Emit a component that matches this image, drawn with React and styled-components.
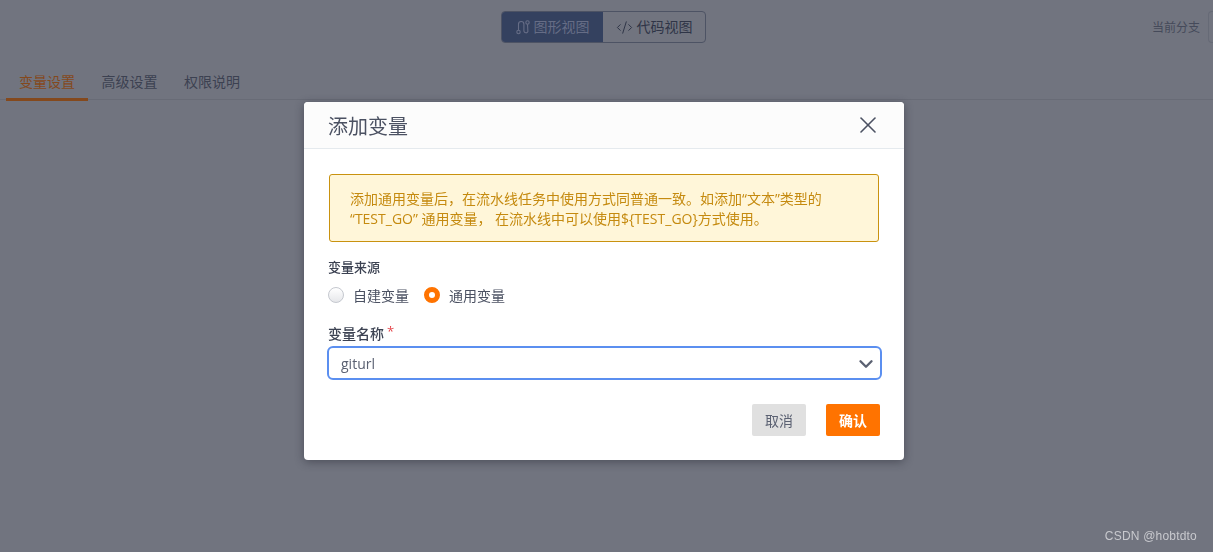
import React from "react";
import styled, { createGlobalStyle } from "styled-components";
import { CodeXml, X, ChevronDown } from "lucide-react";

const GlobalStyle = createGlobalStyle`
  html, body {
    margin: 0;
    height: 100%;
    background: #71747f;
  }
  body {
    font-family: "Open Sans", "Noto Sans CJK SC", sans-serif;
    font-size: 14px;
    overflow: hidden;
  }
`;

const Page = styled.div`
  width: 1213px;
  height: 552px;
  overflow: hidden;
  background: #71747f;
`;

const Header = styled.header`
  height: 66px;
  display: grid;
  grid-template-columns: 501px 205px 1fr;
  padding-top: 11px;
  box-sizing: border-box;
`;

const Toggle = styled.div`
  grid-column: 2;
  display: flex;
  height: 32px;
  border: 1px solid #4d5364;
  border-radius: 4px;
  box-sizing: border-box;
  overflow: hidden;
`;

const ToggleItem = styled.div`
  flex: ${(p) => (p.$active ? "0 0 101px" : "1")};
  display: flex;
  align-items: center;
  justify-content: center;
  gap: 4px;
  background: ${(p) => (p.$active ? "#34415f" : "transparent")};
  color: ${(p) => (p.$active ? "#666d86" : "#2f3547")};
  line-height: 30px;
`;

const Branch = styled.div`
  display: flex;
  align-items: center;
  justify-content: flex-end;
  height: 32px;
  gap: 8px;
  font-size: 12px;
  color: #454a5a;
`;

const BranchBox = styled.span`
  width: 5px;
  height: 32px;
  border: 1px solid #666a76;
  border-right: 0;
  border-radius: 4px 0 0 4px;
  box-sizing: border-box;
`;

const Tabs = styled.nav`
  display: flex;
  height: 33px;
  padding-left: 5.75px;
  border-bottom: 1px solid #686b76;
`;

const Tab = styled.div`
  width: 82.5px;
  height: 35px;
  box-sizing: border-box;
  text-align: center;
  line-height: 32px;
  color: ${(p) => (p.$active ? "#84491d" : "#3c4151")};
  border-bottom: 3px solid ${(p) => (p.$active ? "#84491d" : "transparent")};
`;

const Backdrop = styled.div`
  position: fixed;
  inset: 0;
  display: flex;
  justify-content: center;
  align-items: flex-start;
  padding: 102px 5px 0 0;
`;

const Modal = styled.section`
  width: 600px;
  height: 358px;
  background: #fff;
  border-radius: 4px;
  box-shadow: 0 2px 10px rgba(30, 33, 45, 0.45);
  overflow: hidden;
`;

const ModalHead = styled.div`
  height: 47px;
  box-sizing: border-box;
  display: flex;
  align-items: center;
  justify-content: space-between;
  padding: 0 22px 0 24px;
  background: #fcfcfc;
  border-bottom: 1px solid #e5eaee;
`;

const Title = styled.h2`
  margin: 0;
  font-size: 20px;
  font-weight: 400;
  color: #4b5162;
`;

const ModalBody = styled.div`
  padding: 25px 24px 0 24px;
`;

const Alert = styled.div`
  margin: 0 1px;
  height: 68px;
  box-sizing: border-box;
  padding: 14px 20px;
  background: #fff6d9;
  border: 1px solid #c9920f;
  border-radius: 3px;
  color: #c58a0f;
  font-size: 14px;
  line-height: 20px;
`;

const Label = styled.div`
  font-size: ${(p) => p.$size || 13}px;
  font-weight: 500;
  color: #3c4252;
  line-height: 20px;
`;

const SourceLabel = styled(Label)`
  margin-top: 15px;
`;

const NameLabel = styled(Label)`
  margin-top: 19px;
  position: relative;
`;

const Star = styled.span`
  position: absolute;
  left: 59px;
  top: -3px;
  font-size: 13px;
  font-weight: 400;
  color: #e5484d;
`;

const Radios = styled.div`
  display: flex;
  align-items: center;
  gap: 15px;
  margin-top: 8px;
  height: 20px;
`;

const RadioItem = styled.label`
  display: flex;
  align-items: center;
  gap: 9px;
  color: #4b5162;
`;

const RadioDot = styled.span`
  width: 16px;
  height: 16px;
  border-radius: 50%;
  box-sizing: border-box;
  border: ${(p) => (p.$on ? "5px solid #ff7300" : "1px solid #c5c8cf")};
  background: ${(p) => (p.$on ? "#fff" : "linear-gradient(#ffffff, #e6e7ea)")};
`;

const Select = styled.div`
  margin: 2px -2px 0 -1px;
  height: 34px;
  box-sizing: border-box;
  border: 2px solid #5b8ff0;
  border-radius: 6px;
  display: flex;
  align-items: center;
  justify-content: space-between;
  padding: 1px 3px 0 12px;
  color: #5b6172;
`;

const Footer = styled.div`
  display: flex;
  justify-content: flex-end;
  gap: 20px;
  margin-top: 24px;
`;

const Button = styled.button`
  width: 54px;
  height: 32px;
  padding: 0;
  border: 0;
  border-radius: 2px;
  font: inherit;
  font-weight: ${(p) => (p.$primary ? 700 : 400)};
  background: ${(p) => (p.$primary ? "#ff7300" : "#e0e0e0")};
  color: ${(p) => (p.$primary ? "#fff" : "#5b6172")};
`;

const Watermark = styled.div`
  position: fixed;
  right: 16px;
  bottom: 8px;
  font-family: "Liberation Sans", sans-serif;
  font-size: 12px;
  line-height: 16px;
  letter-spacing: 0.2px;
  color: #c8c9ce;
`;

// pipeline glyph: stem up from a ring, over the top, down and up to a second ring
const GraphIcon = () => (
  <svg width="14" height="15" viewBox="0 0 14 15" fill="none" stroke="currentColor" strokeWidth="1.1">
    <circle cx="2.5" cy="12" r="1.7" />
    <circle cx="11.5" cy="2.5" r="1.7" />
    <path d="M2.5 10.3V4.2a2.7 2.7 0 0 1 5.4 0v7a2.1 2.1 0 0 0 4 0.3L11.5 4.2" />
  </svg>
);

export default function App() {
  return (
    <Page>
      <GlobalStyle />
      <Header>
        <Toggle>
          <ToggleItem $active>
            <GraphIcon />
            图形视图
          </ToggleItem>
          <ToggleItem>
            <CodeXml size={17} strokeWidth={1.4} />
            代码视图
          </ToggleItem>
        </Toggle>
        <Branch>
          当前分支
          <BranchBox />
        </Branch>
      </Header>
      <Tabs>
        <Tab $active>变量设置</Tab>
        <Tab>高级设置</Tab>
        <Tab>权限说明</Tab>
      </Tabs>

      <Backdrop>
        <Modal>
          <ModalHead>
            <Title>添加变量</Title>
            <X size={28} color="#4b5162" strokeWidth={1.4} />
          </ModalHead>
          <ModalBody>
            <Alert>
              {"添加通用变量后\uFF0C在流水线任务中使用方式同普通一致。如添加“文本”类型的"}
              <br />
              {"“TEST_GO” 通用变量\uFF0C 在流水线中可以使用${TEST_GO}方式使用。"}
            </Alert>
            <SourceLabel>变量来源</SourceLabel>
            <Radios>
              <RadioItem>
                <RadioDot />
                自建变量
              </RadioItem>
              <RadioItem>
                <RadioDot $on />
                通用变量
              </RadioItem>
            </Radios>
            <NameLabel $size={14}>
              变量名称
              <Star>*</Star>
            </NameLabel>
            <Select>
              giturl
              <ChevronDown size={22} color="#5b6172" strokeWidth={2.6} />
            </Select>
            <Footer>
              <Button>取消</Button>
              <Button $primary>确认</Button>
            </Footer>
          </ModalBody>
        </Modal>
      </Backdrop>
      <Watermark>CSDN @hobtdto</Watermark>
    </Page>
  );
}
